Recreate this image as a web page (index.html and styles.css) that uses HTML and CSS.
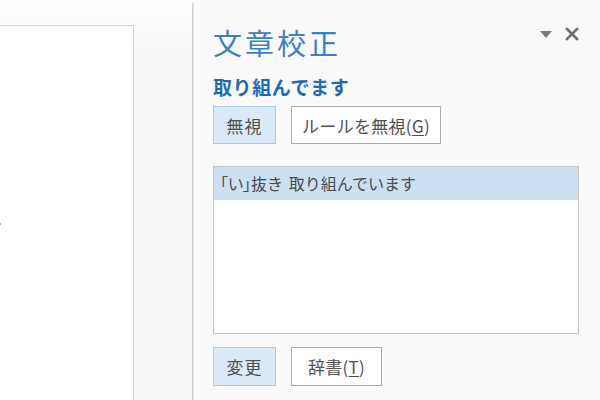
FILE: index.html
```html
<!DOCTYPE html>
<html lang="ja">
<head>
<meta charset="utf-8">
<link rel="stylesheet" href="styles.css">
</head>
<body>
<div class="app">
  <div class="canvas">
    <div class="page"><span class="mark"></span></div>
  </div>
  <div class="divider"></div>
  <div class="pane">
    <div class="header">
      <h1 class="title">文章校正</h1>
      <div class="controls">
        <svg class="icon-tri" width="12" height="7" viewBox="0 0 12 7"><path d="M0 0H12L6 7Z" fill="#7a7a7a"/></svg>
        <svg class="icon-x" width="14" height="14" viewBox="0 0 14 14"><path d="M2 2L12 12M12 2L2 12" stroke="#6e6e6e" stroke-width="2.6" stroke-linecap="square"/></svg>
      </div>
    </div>
    <h2 class="sub">取り組んでます</h2>
    <div class="btn-row">
      <div class="btn btn-primary btn-small">無視</div>
      <div class="btn btn-wide">ルールを無視(<u>G</u>)</div>
    </div>
    <div class="listbox">
      <div class="list-item selected"><span class="prop">「い」</span>抜き 取り組んでいます</div>
    </div>
    <div class="btn-row bottom">
      <div class="btn btn-primary btn-small">変更</div>
      <div class="btn btn-dict">辞書(<u>T</u>)</div>
    </div>
  </div>
</div>
</body>
</html>
```

FILE: styles.css
```css
html, body {
  margin: 0;
  padding: 0;
}
body {
  width: 600px;
  height: 400px;
  overflow: hidden;
  background: #fafafa;
  font-family: "Noto Sans CJK JP", "Noto Sans", sans-serif;
}
.app {
  display: flex;
  height: 400px;
}
.canvas {
  width: 192px;
  flex: none;
  background: linear-gradient(#ffffff, #f7f7f7 60px, #f8f8f8);
  overflow: hidden;
}
.page {
  position: relative;
  margin-top: 25px;
  margin-left: -2px;
  width: 136px;
  height: 400px;
  background: #ffffff;
  border: 1px solid #d6d6d6;
  box-sizing: border-box;
}
.mark {
  position: absolute;
  left: 0;
  top: 197px;
  width: 2px;
  height: 2px;
  background: #b0b0b0;
}
.divider {
  width: 2px;
  flex: none;
  margin-top: 3px;
  background: #e2e2e2;
  border-left: 1px solid #d2d2d2;
  box-sizing: border-box;
}
.pane {
  flex: 1;
  padding: 0 22px 0 19px;
  background: #fafafa;
}
.header {
  display: flex;
  justify-content: space-between;
  align-items: flex-start;
  margin-top: 24px;
}
.title {
  margin: 0;
  font-size: 29px;
  line-height: 36px;
  font-weight: 400;
  letter-spacing: 3px;
  color: #3a82c4;
}
.controls {
  display: flex;
  align-items: center;
  gap: 13px;
  margin-top: 3px;
}
.icon-tri {
  display: block;
  margin-top: 1px;
}
.icon-x {
  display: block;
}
.sub {
  margin: 15px 0 0 0;
  font-size: 19px;
  line-height: 24px;
  font-weight: 700;
  letter-spacing: 0.6px;
  color: #1d6cb3;
}
.btn-row {
  display: flex;
  gap: 15px;
  margin-top: 7px;
}
.btn-row.bottom {
  margin-top: 13px;
}
.btn {
  box-sizing: border-box;
  height: 38px;
  display: flex;
  align-items: center;
  justify-content: center;
  border: 1px solid #ababab;
  background: #ffffff;
  color: #505050;
  font-size: 17px;
  letter-spacing: 0.3px;
}
.btn-row.bottom .btn {
  height: 39px;
}
.btn-primary {
  background: #dce9f7;
  border-color: #a9c9ea;
}
.btn-small {
  width: 63px;
  letter-spacing: 1px;
}
.btn-wide {
  width: 150px;
}
.btn-dict {
  width: 91px;
}
.btn u {
  text-underline-offset: 2px;
}
.listbox {
  box-sizing: border-box;
  margin-top: 22px;
  width: 366px;
  height: 168px;
  border: 1px solid #c3c3c3;
  background: #ffffff;
}
.list-item {
  height: 33px;
  line-height: 33px;
  padding-left: 6px;
  font-size: 16px;
  word-spacing: 2px;
  color: #4a4a4a;
}
.list-item .prop {
  font-feature-settings: "palt";
}
.list-item.selected {
  background: #cde0f2;
}
```
